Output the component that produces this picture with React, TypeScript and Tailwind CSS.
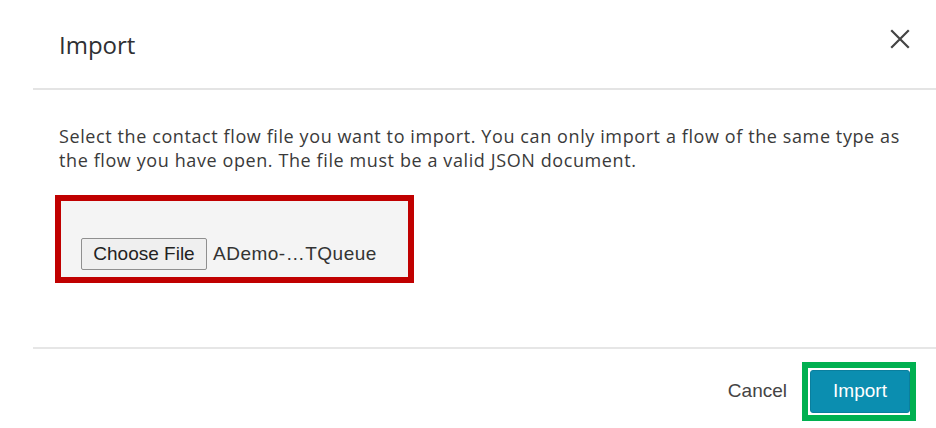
export default function App() {
  return (
    <div className="w-[936px] h-[428px] bg-white overflow-hidden text-[#333]" style={{ fontFamily: '"Open Sans", sans-serif' }}>
      {/* Header */}
      <div className="h-[88px] flex items-center justify-between pl-[59px] pr-[26px]">
        <div className="text-[24px] leading-none text-[#2f3033] mt-[2px]">Import</div>
        <svg width="20" height="20" viewBox="0 0 20 20" className="mt-[-11px]">
          <path d="M2 2 L18 18 M18 2 L2 18" stroke="#444" strokeWidth="2.2" strokeLinecap="square" />
        </svg>
      </div>
      <div className="ml-[33px] h-[2px] bg-[#e4e4e4]" />

      {/* Body */}
      <div className="pl-[55px] pt-[34px]">
        <p className="ml-[4px] text-[18px] leading-[24px] tracking-[0.6px] text-[#3a3a3a] w-[856px]">
          Select the contact flow file you want to import. You can only import a flow of the same type as the flow you have open. The file must be a valid JSON document.
        </p>
        <div className="mt-[23px] w-[359px] h-[88px] border-[6px] border-[#c00000] bg-[#f4f4f4] flex items-end pl-[20px] pb-[7px]" style={{ fontFamily: '"Liberation Sans", Arial, sans-serif' }}>
          <div className="w-[126px] h-[32px] border border-[#8f8f8f] rounded-[2px] bg-[#efefef] flex items-center justify-center text-[19px] text-[#222]">
            Choose File
          </div>
          <div className="ml-[6px] h-[32px] flex items-center text-[19px] tracking-[0.5px] text-[#333]">ADemo-…TQueue</div>
        </div>
      </div>

      {/* Footer */}
      <div className="mt-[64px] ml-[33px] h-[2px] bg-[#e6e6e6]" />
      <div className="flex items-start justify-end pr-[20px] pt-[13px]" style={{ fontFamily: '"Liberation Sans", Arial, sans-serif' }}>
        <div className="h-[59px] flex items-center mr-[15px] text-[19px] text-[#444]">Cancel</div>
        <div className="w-[114px] h-[59px] border-[6px] border-[#00b050] pl-[2px] pt-[2px] pb-[2px]">
          <div className="w-[100px] h-[43px] rounded-[3px] bg-[#0b8eb0] border border-[#0a7f9e] flex items-center justify-center text-[19px] text-white">
            Import
          </div>
        </div>
      </div>
    </div>
  );
}
